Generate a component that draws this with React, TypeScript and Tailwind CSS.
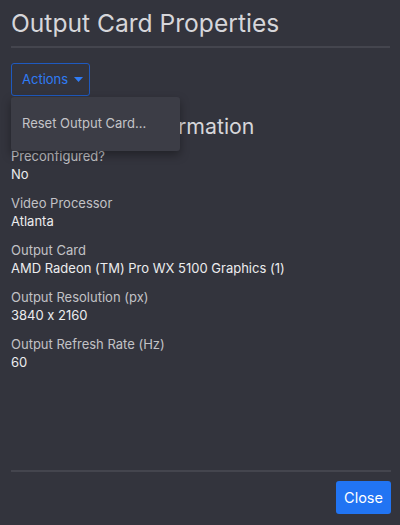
import React from 'react';

const fields = [
  { label: 'Preconfigured?', value: 'No' },
  { label: 'Video Processor', value: 'Atlanta' },
  { label: 'Output Card', value: 'AMD Radeon (TM) Pro WX 5100 Graphics (1)' },
  { label: 'Output Resolution (px)', value: '3840 x 2160' },
  { label: 'Output Refresh Rate (Hz)', value: '60' },
];

export default function App() {
  return (
    <div
      className="flex flex-col w-[400px] h-[525px] bg-[#33343d] overflow-hidden [font-feature-settings:'calt'_0]"
      style={{ fontFamily: 'Inter, "Noto Sans", sans-serif' }}
    >
      <header className="mx-[11px] mr-[10px] pt-2 pb-2 border-b-2 border-[#44454e]">
        <h1 className="text-[24.6px] leading-[30px] text-[#d6d6da] font-normal">Output Card Properties</h1>
      </header>

      <main className="flex-1 px-[11px] pt-[15px]">
        <div className="relative">
          <button className="flex items-center gap-[6px] h-[33px] pl-[10px] pr-[6px] border border-[#1f5ac0] rounded-[3px] text-[13px] text-[#2f7cf6]">
            Actions
            <svg width="9" height="5" viewBox="0 0 9 5">
              <path d="M0 0h9L4.5 5z" fill="#2f7cf6" />
            </svg>
          </button>
          <div className="absolute left-0 top-[34px] w-[169px] h-[54px] bg-[#3c3d46] rounded-[3px] shadow-[0_4px_10px_rgba(0,0,0,0.35)] flex items-center px-[11px] z-10">
            <span className="text-[13px] text-[#c4c4c8]">Reset Output Card...</span>
          </div>
        </div>

        <h2 className="mt-[17px] text-[21.3px] leading-[26px] text-[#d6d6da] font-normal">Output Card Information</h2>

        <div className="mt-[8px] flex flex-col gap-[11px]">
          {fields.map((f) => (
            <div key={f.label} className="flex flex-col text-[13px] leading-[18px]">
              <span className="text-[#c2c2c6]">{f.label}</span>
              <span className="text-[#ececee]">{f.value}</span>
            </div>
          ))}
        </div>
      </main>

      <footer className="mx-[11px] mr-[9px] border-t-2 border-[#44454e] pt-[9px] pb-[11px] flex justify-end">
        <button className="h-[33px] w-[55px] bg-[#2174f3] rounded-[3px] text-[14.5px] text-white">Close</button>
      </footer>
    </div>
  );
}
